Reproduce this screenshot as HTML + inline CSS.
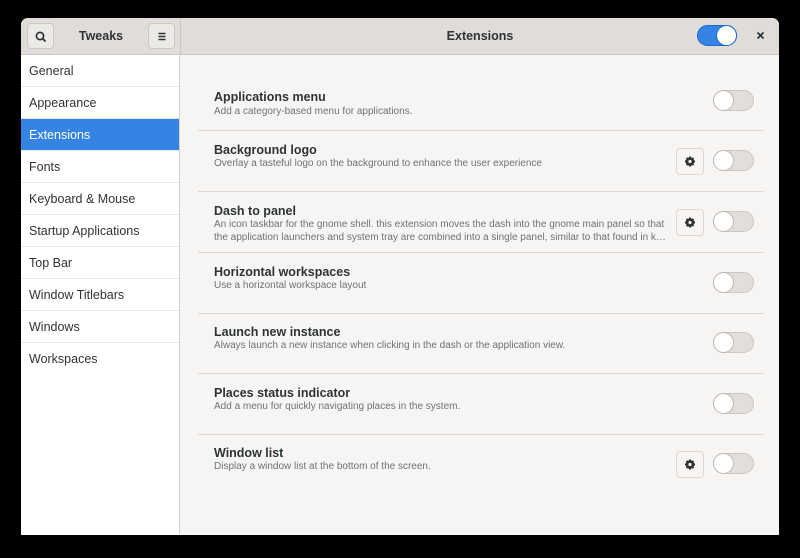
<!DOCTYPE html>
<html><head><style>
*{box-sizing:border-box;margin:0;padding:0}
body{width:800px;height:558px;background:#000;font-family:"Liberation Sans",sans-serif;position:relative;overflow:hidden}
.win{position:absolute;left:21px;top:18px;width:758px;height:517px;background:#f6f5f4;border-radius:7px 7px 0 0;overflow:hidden}
.hb{position:absolute;left:0;top:0;width:758px;height:37px;background:#e0ddd9;border-bottom:1px solid #cdc7c2}
.hbl{position:absolute;left:0;top:0;width:160px;height:37px;border-right:1px solid #cdc7c2}
.btn{position:absolute;width:27px;height:26px;background:#eceae7;border:1px solid #cdc7c2;border-radius:4px}
.side{position:absolute;left:0;top:37px;width:159px;height:480px;background:#fff;border-right:1px solid #d5d0cc}
.side div{height:32px;line-height:33px;padding-left:8px;font-size:12.5px;color:#2e3436;border-bottom:1px solid #e8e6e3}
.side .sel{background:#3584e4;color:#fff}
.row{position:absolute;left:177px;width:566px;height:61px;border-bottom:1px solid #dcd8d4}
.row .t{position:absolute;left:16px;top:20px;font-size:12.5px;font-weight:bold;color:#2e3436}
.row .d{position:absolute;left:16px;top:36px;font-size:10px;color:#6e7273;line-height:12.5px;width:445px;white-space:nowrap}
.tg{position:absolute;left:515px;width:41px;height:21px;border-radius:11px;background:#e1dedb;border:1px solid #cdc7c2}
.tg::after{content:"";position:absolute;left:-1px;top:-1px;width:21px;height:21px;border-radius:50%;background:#fff;border:1px solid #bfb8b1;box-sizing:border-box}
.gear{position:absolute;left:478px;width:28px;height:27px;border:1px solid #dcd8d4;border-radius:4px;background:#f6f5f4}
</style></head><body>
<div class="win">
<div class="hb">
 <div class="hbl">
  <div class="btn" style="left:6px;top:5px"><svg width="27" height="26" viewBox="0 0 27 26"><circle cx="12" cy="12" r="3.6" fill="none" stroke="#2e3436" stroke-width="1.7"/><line x1="14.6" y1="14.6" x2="17.5" y2="17.5" stroke="#2e3436" stroke-width="1.9"/></svg></div>
  <div style="position:absolute;left:0;width:160px;top:11px;text-align:center;font-size:12.5px;font-weight:bold;color:#2e3436">Tweaks</div>
  <div class="btn" style="left:127px;top:5px"><svg width="27" height="26" viewBox="0 0 27 26"><path d="M9.5 9.5h7M9.5 12.5h7M9.5 15.5h7" stroke="#2e3436" stroke-width="1.5"/></svg></div>
 </div>
 <div style="position:absolute;left:160px;width:598px;top:11px;text-align:center;font-size:12.5px;font-weight:bold;color:#2e3436">Extensions</div>
 <div style="position:absolute;left:676px;top:7px;width:40px;height:21px;border-radius:11px;background:#3584e4;border:1px solid #1b6acb"><div style="position:absolute;right:-1px;top:-1px;width:21px;height:21px;border-radius:50%;background:#fff;border:1px solid #1b6acb"></div></div>
 <svg style="position:absolute;left:735px;top:13px" width="9" height="9" viewBox="0 0 9 9"><path d="M1.5 1.5l6 6M7.5 1.5l-6 6" stroke="#2e3436" stroke-width="1.7"/></svg>
</div>
<div class="side">
<div>General</div><div>Appearance</div><div class="sel">Extensions</div><div>Fonts</div><div>Keyboard &amp; Mouse</div><div>Startup Applications</div><div>Top Bar</div><div>Window Titlebars</div><div>Windows</div><div style="border:none">Workspaces</div>
</div>
<svg width="0" height="0" style="position:absolute"><defs><g id="g"><circle cx="13" cy="12.5" r="3.2" fill="none" stroke="#2e3436" stroke-width="2.2"/><path d="M13 7.5v10M8 12.5h10M9.5 9l7 7M16.5 9l-7 7" stroke="#2e3436" stroke-width="2"/><circle cx="13" cy="12.5" r="1.6" fill="#f6f5f4"/></g></defs></svg>
<div class="row" style="top:52px"><div class="t">Applications menu</div><div class="d">Add a category-based menu for applications.</div><div class="tg" style="top:20px"></div></div>
<div class="row" style="top:113px"><div class="t" style="top:12px">Background logo</div><div class="d" style="top:27px">Overlay a tasteful logo on the background to enhance the user experience</div><div class="gear" style="top:17px"><svg width="26" height="25"><use href="#g"/></svg></div><div class="tg" style="top:19px"></div></div>
<div class="row" style="top:174px"><div class="t" style="top:12px">Dash to panel</div><div class="d" style="top:27px">An icon taskbar for the gnome shell. this extension moves the dash into the gnome main panel so that<br>the application launchers and system tray are combined into a single panel, similar to that found in k…</div><div class="gear" style="top:17px"><svg width="26" height="25"><use href="#g"/></svg></div><div class="tg" style="top:19px"></div></div>
<div class="row" style="top:235px"><div class="t" style="top:12px">Horizontal workspaces</div><div class="d" style="top:27px">Use a horizontal workspace layout</div><div class="tg" style="top:19px"></div></div>
<div class="row" style="top:295px"><div class="t" style="top:12px">Launch new instance</div><div class="d" style="top:27px">Always launch a new instance when clicking in the dash or the application view.</div><div class="tg" style="top:19px"></div></div>
<div class="row" style="top:356px"><div class="t" style="top:12px">Places status indicator</div><div class="d" style="top:27px">Add a menu for quickly navigating places in the system.</div><div class="tg" style="top:19px"></div></div>
<div class="row" style="top:416px;border:none"><div class="t" style="top:12px">Window list</div><div class="d" style="top:27px">Display a window list at the bottom of the screen.</div><div class="gear" style="top:17px"><svg width="26" height="25"><use href="#g"/></svg></div><div class="tg" style="top:19px"></div></div>
</div>
</body></html>
